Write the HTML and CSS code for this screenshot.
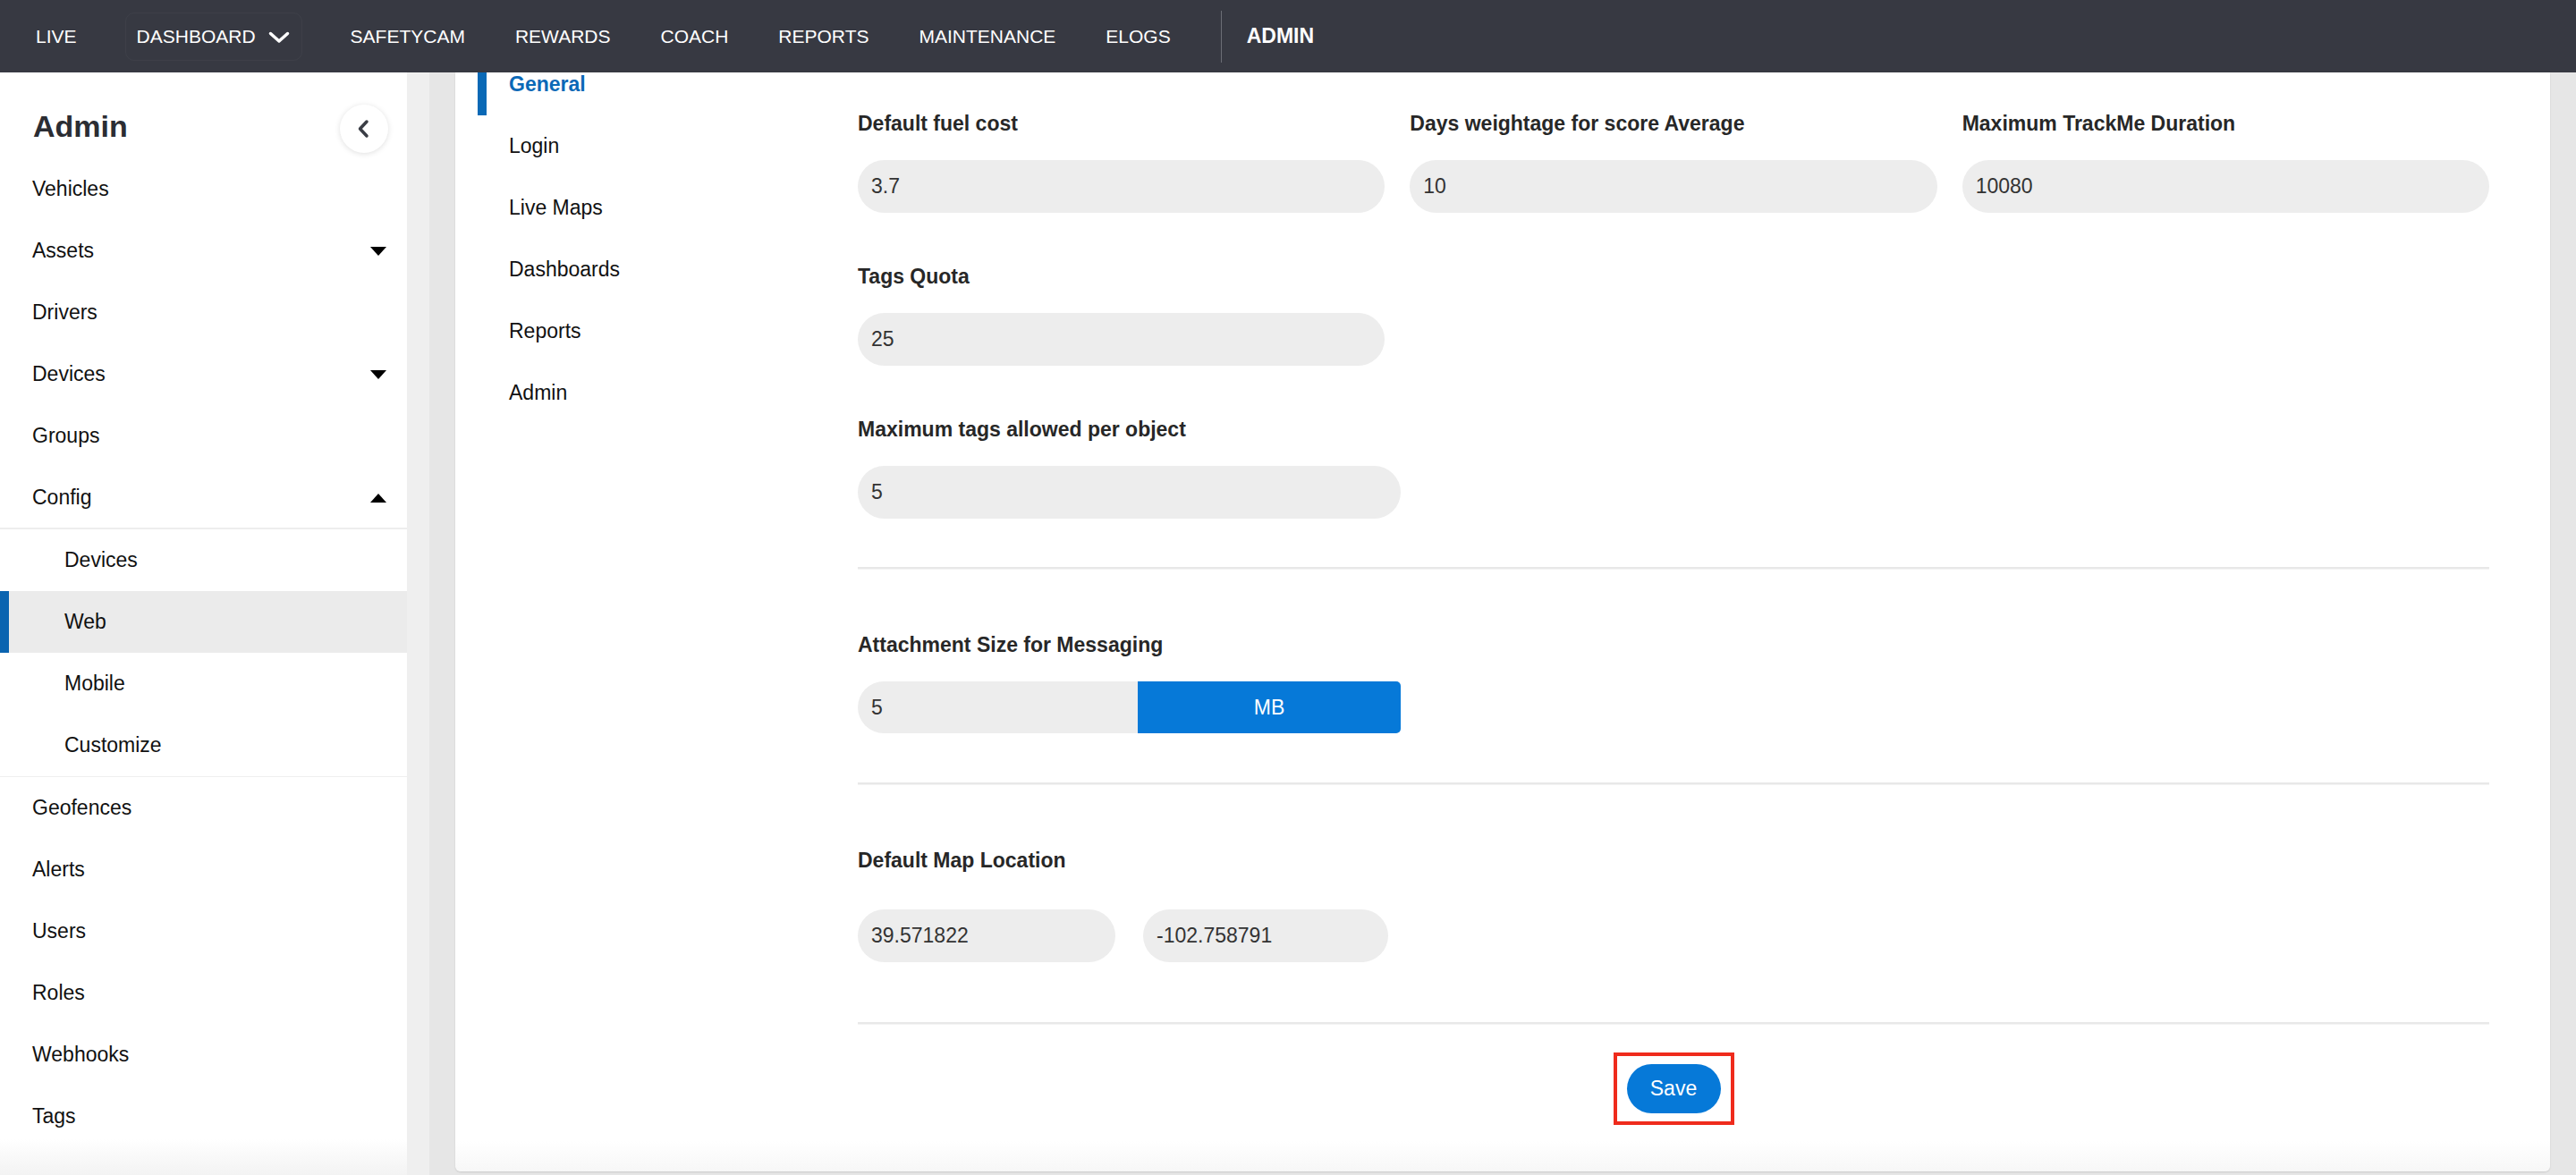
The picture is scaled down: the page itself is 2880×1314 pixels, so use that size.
FILE: index.html
```html
<!DOCTYPE html>
<html lang="en">
<head>
    <meta charset="UTF-8">
    <meta name="viewport" content="width=device-width, initial-scale=1.0">
    <title>Admin - Config - Web</title>
    <link rel="stylesheet" href="styles.css">
</head>
<body>
    <!-- Top navigation -->
    <nav class="topnav">
        <a class="nav-link">LIVE</a>
        <a class="nav-link nav-dropdown">DASHBOARD
            <svg class="nav-chevron" width="24" height="14" viewBox="0 0 24 14"><path d="M2.5 2.5 L12 11 L21.5 2.5" fill="none" stroke="#fff" stroke-width="3.5" stroke-linecap="round" stroke-linejoin="round"/></svg>
        </a>
        <a class="nav-link">SAFETYCAM</a>
        <a class="nav-link">REWARDS</a>
        <a class="nav-link">COACH</a>
        <a class="nav-link">REPORTS</a>
        <a class="nav-link">MAINTENANCE</a>
        <a class="nav-link">ELOGS</a>
        <a class="nav-link nav-admin">ADMIN</a>
    </nav>

    <div class="layout">
        <!-- Left sidebar -->
        <aside class="sidebar">
            <div class="sidebar-head">
                <h1>Admin</h1>
                <button class="collapse-btn">
                    <svg width="14" height="22" viewBox="0 0 14 22"><path d="M11 3 L3.5 11 L11 19" fill="none" stroke="#3a3d45" stroke-width="3.5" stroke-linecap="round" stroke-linejoin="round"/></svg>
                </button>
            </div>
            <a class="side-item">Vehicles</a>
            <a class="side-item">Assets <span class="caret-down"></span></a>
            <a class="side-item">Drivers</a>
            <a class="side-item">Devices <span class="caret-down"></span></a>
            <a class="side-item">Groups</a>
            <a class="side-item">Config <span class="caret-up"></span></a>
            <div class="side-sub">
                <a class="side-item sub">Devices</a>
                <a class="side-item sub active">Web</a>
                <a class="side-item sub">Mobile</a>
                <a class="side-item sub">Customize</a>
            </div>
            <a class="side-item">Geofences</a>
            <a class="side-item">Alerts</a>
            <a class="side-item">Users</a>
            <a class="side-item">Roles</a>
            <a class="side-item">Webhooks</a>
            <a class="side-item">Tags</a>
        </aside>
        <div class="gutter"></div>

        <!-- Main panel -->
        <main class="panel">
            <ul class="subnav">
                <li class="active">General</li>
                <li>Login</li>
                <li>Live Maps</li>
                <li>Dashboards</li>
                <li>Reports</li>
                <li>Admin</li>
            </ul>

            <form class="settings">
                <div class="row3">
                    <div class="field">
                        <label>Default fuel cost</label>
                        <input type="text" class="pill-input" value="3.7">
                    </div>
                    <div class="field">
                        <label>Days weightage for score Average</label>
                        <input type="text" class="pill-input" value="10">
                    </div>
                    <div class="field">
                        <label>Maximum TrackMe Duration</label>
                        <input type="text" class="pill-input" value="10080">
                    </div>
                </div>

                <div class="field narrow spaced">
                    <label>Tags Quota</label>
                    <input type="text" class="pill-input" value="25">
                </div>

                <div class="field wide spaced">
                    <label>Maximum tags allowed per object</label>
                    <input type="text" class="pill-input" value="5">
                </div>

                <hr class="divider first">

                <div class="field wide">
                    <label>Attachment Size for Messaging</label>
                    <div class="input-group">
                        <input type="text" class="pill-input group-input" value="5">
                        <button type="button" class="unit-btn">MB</button>
                    </div>
                </div>

                <hr class="divider second">

                <div class="field">
                    <label class="loose">Default Map Location</label>
                    <div class="coords">
                        <input type="text" class="pill-input lat" value="39.571822">
                        <input type="text" class="pill-input lng" value="-102.758791">
                    </div>
                </div>

                <hr class="divider third">

                <div class="save-row">
                    <span class="highlight-box">
                        <button type="button" class="save-btn">Save</button>
                    </span>
                </div>
            </form>
        </main>
        <div class="right-gutter"></div>
    </div>
</body>
</html>
```

FILE: styles.css
```css
html, body {
    margin: 0;
    height: 100%;
}

body {
    background-color: #e6e6e6;
    font-family: "Liberation Sans", Arial, sans-serif;
    display: flex;
    flex-direction: column;
    overflow: hidden;
}

/* top bar */
.topnav {
    height: 81px;
    flex: none;
    background-color: #373942;
    display: flex;
    align-items: center;
    padding-left: 12px;
}

.nav-link {
    color: #fff;
    font-size: 21px;
    padding: 0 28px;
    white-space: nowrap;
}

.nav-dropdown {
    display: flex;
    align-items: center;
    height: 52px;
    padding: 0 13px 0 12px;
    margin: 0 26px;
    border: 1px solid rgba(255, 255, 255, 0.035);
    border-radius: 10px;
}

.nav-chevron {
    margin-left: 14px;
    margin-top: 2px;
}

.nav-admin {
    font-weight: bold;
    font-size: 23px;
    height: 58px;
    display: flex;
    align-items: center;
    border-left: 1px solid #6c6e75;
    margin-left: 28px;
    padding-left: 28px;
}

.layout {
    flex: 1;
    display: flex;
    min-height: 0;
}

/* sidebar */
.sidebar {
    width: 455px;
    flex: none;
    background: linear-gradient(to bottom, #fff calc(100% - 40px), #f3f3f3);
}

.sidebar-head {
    height: 72px;
    padding: 24px 21px 0 37px;
    display: flex;
    align-items: center;
    justify-content: space-between;
}

.sidebar-head h1 {
    margin: 0;
    font-size: 34px;
    color: #2b2d33;
}

.collapse-btn {
    width: 54px;
    height: 54px;
    border-radius: 50%;
    border: none;
    background-color: #fff;
    box-shadow: 0 1px 6px rgba(0, 0, 0, 0.13);
    display: flex;
    align-items: center;
    justify-content: center;
    padding: 0 2px 0 0;
    margin-top: 6px;
}

.side-item {
    height: 69px;
    display: flex;
    align-items: center;
    justify-content: space-between;
    padding: 0 23px 0 36px;
    font-size: 23px;
    color: #111;
}

.side-sub {
    border-top: 2px solid #ededed;
    border-bottom: 1px solid #efefef;
    margin-top: -1px;
}

.side-item.sub {
    padding-left: 72px;
    height: 69px;
}

.side-item.active {
    background-color: #ebebeb;
    box-shadow: inset 10px 0 0 #0a64b0;
}

.caret-down {
    width: 0;
    height: 0;
    border-left: 9.5px solid transparent;
    border-right: 9.5px solid transparent;
    border-top: 10px solid #000;
}

.caret-up {
    width: 0;
    height: 0;
    border-left: 9.5px solid transparent;
    border-right: 9.5px solid transparent;
    border-bottom: 10px solid #000;
}

.gutter {
    width: 25px;
    flex: none;
    background-color: #efefef;
}

.right-gutter {
    width: 29px;
    flex: none;
}

/* main panel */
.panel {
    flex: 1;
    margin: 0 0 4px 29px;
    background: linear-gradient(to bottom, #fff calc(100% - 34px), #f7f7f7);
    border-radius: 0 0 6px 6px;
    box-shadow: 0 1px 2px rgba(0, 0, 0, 0.12);
    display: flex;
    overflow: hidden;
}

.subnav {
    list-style: none;
    margin: -21px 0 0 25px;
    padding: 0;
    width: 425px;
    flex: none;
}

.subnav li {
    height: 69px;
    display: flex;
    align-items: center;
    padding-left: 25px;
    border-left: 10px solid transparent;
    font-size: 23px;
    color: #111;
}

.subnav li.active {
    border-left-color: #0a69b6;
    color: #0b69b7;
    font-weight: bold;
}

.settings {
    flex: 1;
    padding: 43px 68px 0 0;
}

.row3 {
    display: grid;
    grid-template-columns: repeat(3, 1fr);
    gap: 28px;
}

.field label {
    display: block;
    font-size: 23px;
    line-height: 28px;
    font-weight: bold;
    color: #272727;
    margin-bottom: 27px;
}

.field label.loose {
    margin-bottom: 41px;
}

.field.spaced {
    margin-top: 57px;
}

.field.narrow {
    width: 589px;
}

.field.wide {
    width: 607px;
}

.pill-input {
    display: block;
    width: 100%;
    height: 59px;
    box-sizing: border-box;
    border: none;
    border-radius: 30px;
    background-color: #ededed;
    padding: 0 15px;
    font-family: "Liberation Sans", Arial, sans-serif;
    font-size: 23px;
    color: #333;
    outline: none;
}

.input-group {
    display: flex;
    height: 58px;
}

.group-input {
    width: 313px;
    height: 58px;
    border-radius: 30px 0 0 30px;
}

.unit-btn {
    flex: 1;
    border: none;
    border-radius: 0 5px 5px 0;
    background-color: #0679d8;
    color: #fff;
    font-family: "Liberation Sans", Arial, sans-serif;
    font-size: 23px;
}

.coords {
    display: flex;
    gap: 31px;
}

.coords .lat {
    width: 288px;
}

.coords .lng {
    width: 274px;
}

.divider {
    height: 0;
    border: none;
    border-top: 2px solid #e8e8e8;
    border-bottom: 1px solid #f3f3f3;
    margin: 0;
}

.divider.first {
    margin: 54px 0 70px;
}

.divider.second {
    margin: 55px 0 70px;
}

.divider.third {
    margin: 67px 0 0;
}

.save-row {
    text-align: center;
    margin-top: 31px;
}

.highlight-box {
    display: inline-block;
    border: 4px solid #ef2b1c;
    padding: 9px 11px;
    line-height: 0;
}

.save-btn {
    width: 105px;
    height: 55px;
    border: none;
    border-radius: 28px;
    background-color: #0679d8;
    color: #fff;
    font-family: "Liberation Sans", Arial, sans-serif;
    font-size: 23px;
}
```
